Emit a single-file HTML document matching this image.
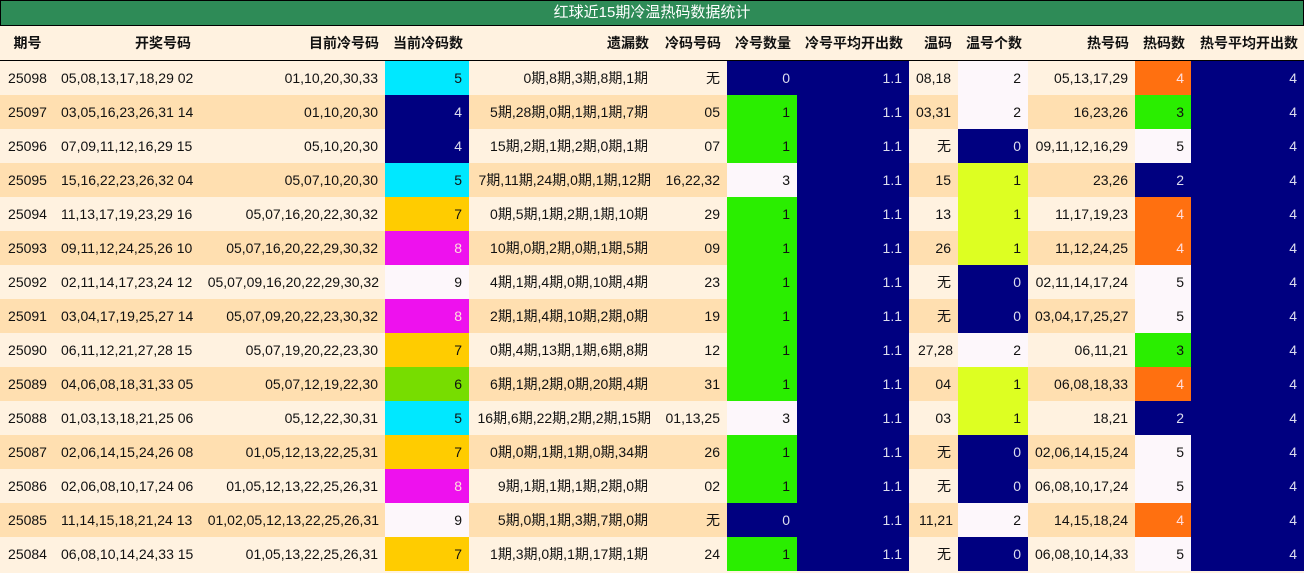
<!DOCTYPE html>
<html><head><meta charset="utf-8"><style>
body{margin:0;width:1304px;height:573px;overflow:hidden;background:#fff2e0;font-family:"Liberation Sans","Noto Sans CJK SC",sans-serif;}
.t{height:24px;background:#2e8b57;border:1px solid #000;color:#fff;text-align:center;font-size:15px;line-height:24px;box-sizing:content-box;width:1302px}
table{border-collapse:collapse;table-layout:fixed;width:1304px;font-size:14px;color:#111}
th{height:34px;font-weight:bold;text-align:right;padding:0 6px;border-bottom:1px solid #000;white-space:nowrap}
td{height:34px;padding:0 7px;text-align:right;white-space:nowrap;overflow:hidden}
td:first-child{text-align:center;padding:0}
td:nth-child(2){text-align:left;padding:0 0 0 6px}
tr.a{background:#fff2e0}tr.b{background:#ffdfb0}
.cy{background:#00e8ff}.nv{background:#000080;color:#dde}.go{background:#ffcc00}.mg{background:#ee11ee;color:#fdd}
.wh{background:#fdf7fb}.lm{background:#77dd00}.gr{background:#2aee00}.yg{background:#ddff22}.or{background:#ff7010;color:#fdd}
</style></head><body>
<div class="t">红球近15期冷温热码数据统计</div>
<table>
<colgroup><col style="width:55px"><col style="width:142px"><col style="width:188px"><col style="width:84px"><col style="width:186px"><col style="width:72px"><col style="width:70px"><col style="width:112px"><col style="width:49px"><col style="width:70px"><col style="width:107px"><col style="width:56px"><col style="width:113px"></colgroup>
<tr><th style="text-align:center">期号</th><th>开奖号码</th><th>目前冷号码</th><th>当前冷码数</th><th>遗漏数</th><th>冷码号码</th><th>冷号数量</th><th>冷号平均开出数</th><th>温码</th><th>温号个数</th><th>热号码</th><th>热码数</th><th>热号平均开出数</th></tr>
<tr class="a"><td>25098</td><td>05,08,13,17,18,29 02</td><td>01,10,20,30,33</td><td class="cy">5</td><td>0期,8期,3期,8期,1期</td><td>无</td><td class="nv">0</td><td class="nv">1.1</td><td>08,18</td><td class="wh">2</td><td>05,13,17,29</td><td class="or">4</td><td class="nv">4</td></tr>
<tr class="b"><td>25097</td><td>03,05,16,23,26,31 14</td><td>01,10,20,30</td><td class="nv">4</td><td>5期,28期,0期,1期,1期,7期</td><td>05</td><td class="gr">1</td><td class="nv">1.1</td><td>03,31</td><td class="wh">2</td><td>16,23,26</td><td class="gr">3</td><td class="nv">4</td></tr>
<tr class="a"><td>25096</td><td>07,09,11,12,16,29 15</td><td>05,10,20,30</td><td class="nv">4</td><td>15期,2期,1期,2期,0期,1期</td><td>07</td><td class="gr">1</td><td class="nv">1.1</td><td>无</td><td class="nv">0</td><td>09,11,12,16,29</td><td class="wh">5</td><td class="nv">4</td></tr>
<tr class="b"><td>25095</td><td>15,16,22,23,26,32 04</td><td>05,07,10,20,30</td><td class="cy">5</td><td style="padding:0 4px">7期,11期,24期,0期,1期,12期</td><td>16,22,32</td><td class="wh">3</td><td class="nv">1.1</td><td>15</td><td class="yg">1</td><td>23,26</td><td class="nv">2</td><td class="nv">4</td></tr>
<tr class="a"><td>25094</td><td>11,13,17,19,23,29 16</td><td>05,07,16,20,22,30,32</td><td class="go">7</td><td>0期,5期,1期,2期,1期,10期</td><td>29</td><td class="gr">1</td><td class="nv">1.1</td><td>13</td><td class="yg">1</td><td>11,17,19,23</td><td class="or">4</td><td class="nv">4</td></tr>
<tr class="b"><td>25093</td><td>09,11,12,24,25,26 10</td><td>05,07,16,20,22,29,30,32</td><td class="mg">8</td><td>10期,0期,2期,0期,1期,5期</td><td>09</td><td class="gr">1</td><td class="nv">1.1</td><td>26</td><td class="yg">1</td><td>11,12,24,25</td><td class="or">4</td><td class="nv">4</td></tr>
<tr class="a"><td>25092</td><td>02,11,14,17,23,24 12</td><td style="padding:0 6px 0 0">05,07,09,16,20,22,29,30,32</td><td class="wh">9</td><td>4期,1期,4期,0期,10期,4期</td><td>23</td><td class="gr">1</td><td class="nv">1.1</td><td>无</td><td class="nv">0</td><td>02,11,14,17,24</td><td class="wh">5</td><td class="nv">4</td></tr>
<tr class="b"><td>25091</td><td>03,04,17,19,25,27 14</td><td>05,07,09,20,22,23,30,32</td><td class="mg">8</td><td>2期,1期,4期,10期,2期,0期</td><td>19</td><td class="gr">1</td><td class="nv">1.1</td><td>无</td><td class="nv">0</td><td>03,04,17,25,27</td><td class="wh">5</td><td class="nv">4</td></tr>
<tr class="a"><td>25090</td><td>06,11,12,21,27,28 15</td><td>05,07,19,20,22,23,30</td><td class="go">7</td><td>0期,4期,13期,1期,6期,8期</td><td>12</td><td class="gr">1</td><td class="nv">1.1</td><td style="padding:0 5px">27,28</td><td class="wh">2</td><td>06,11,21</td><td class="gr">3</td><td class="nv">4</td></tr>
<tr class="b"><td>25089</td><td>04,06,08,18,31,33 05</td><td>05,07,12,19,22,30</td><td class="lm">6</td><td>6期,1期,2期,0期,20期,4期</td><td>31</td><td class="gr">1</td><td class="nv">1.1</td><td>04</td><td class="yg">1</td><td>06,08,18,33</td><td class="or">4</td><td class="nv">4</td></tr>
<tr class="a"><td>25088</td><td>01,03,13,18,21,25 06</td><td>05,12,22,30,31</td><td class="cy">5</td><td style="padding:0 4px">16期,6期,22期,2期,2期,15期</td><td>01,13,25</td><td class="wh">3</td><td class="nv">1.1</td><td>03</td><td class="yg">1</td><td>18,21</td><td class="nv">2</td><td class="nv">4</td></tr>
<tr class="b"><td>25087</td><td>02,06,14,15,24,26 08</td><td>01,05,12,13,22,25,31</td><td class="go">7</td><td>0期,0期,1期,1期,0期,34期</td><td>26</td><td class="gr">1</td><td class="nv">1.1</td><td>无</td><td class="nv">0</td><td>02,06,14,15,24</td><td class="wh">5</td><td class="nv">4</td></tr>
<tr class="a"><td>25086</td><td>02,06,08,10,17,24 06</td><td>01,05,12,13,22,25,26,31</td><td class="mg">8</td><td>9期,1期,1期,1期,2期,0期</td><td>02</td><td class="gr">1</td><td class="nv">1.1</td><td>无</td><td class="nv">0</td><td>06,08,10,17,24</td><td class="wh">5</td><td class="nv">4</td></tr>
<tr class="b"><td>25085</td><td>11,14,15,18,21,24 13</td><td style="padding:0 6px 0 0">01,02,05,12,13,22,25,26,31</td><td class="wh">9</td><td>5期,0期,1期,3期,7期,0期</td><td>无</td><td class="nv">0</td><td class="nv">1.1</td><td style="padding:0 5px">11,21</td><td class="wh">2</td><td>14,15,18,24</td><td class="or">4</td><td class="nv">4</td></tr>
<tr class="a"><td>25084</td><td>06,08,10,14,24,33 15</td><td>01,05,13,22,25,26,31</td><td class="go">7</td><td>1期,3期,0期,1期,17期,1期</td><td>24</td><td class="gr">1</td><td class="nv">1.1</td><td>无</td><td class="nv">0</td><td>06,08,10,14,33</td><td class="wh">5</td><td class="nv">4</td></tr>
</table>
</body></html>
